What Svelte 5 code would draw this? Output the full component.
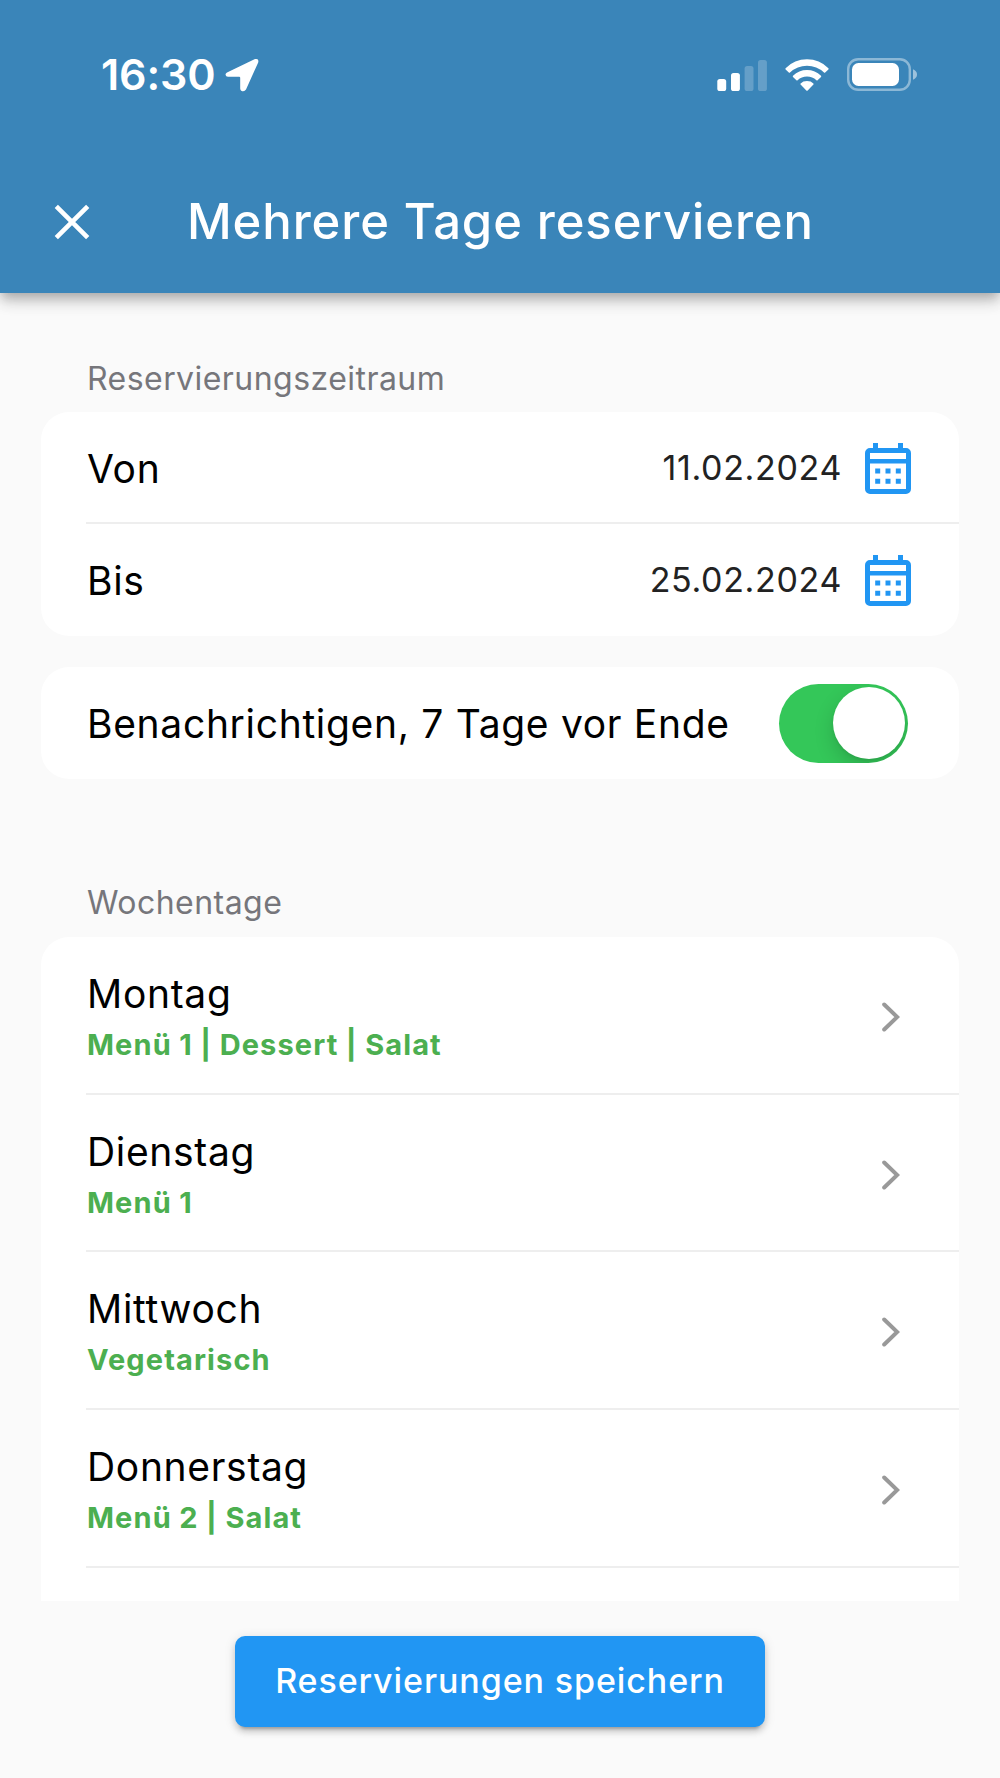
<script lang="ts">
  type Day = { name: string; menu: string };

  const range = [
    { label: 'Von', date: '11.02.2024' },
    { label: 'Bis', date: '25.02.2024' },
  ];

  const days: Day[] = [
    { name: 'Montag', menu: 'Menü 1 | Dessert | Salat' },
    { name: 'Dienstag', menu: 'Menü 1' },
    { name: 'Mittwoch', menu: 'Vegetarisch' },
    { name: 'Donnerstag', menu: 'Menü 2 | Salat' },
  ];

  let notify = $state(true);
</script>

<div class="screen">
  <header>
    <div class="status">
      <span class="time">16:30</span>
      <svg class="location" width="34" height="34" viewBox="0 0 34 34" aria-hidden="true">
        <path d="M2 14.6L30 1.1Q34.2 0 33.2 4.4L21 31.6Q19.4 34 16.6 33Q15.2 32.2 15.2 30.6V19.8Q15.2 18.8 14.2 18.8H3Q.8 18.6.5 16.8.5 15.3 2 14.6z" fill="#fff"/>
      </svg>
      <div class="status-icons">
        <svg width="50" height="32" viewBox="0 0 50 32" fill="#fff" aria-hidden="true">
          <rect x="0.3" y="20" width="8.9" height="12" rx="2.6"/>
          <rect x="14" y="14" width="8.9" height="18" rx="2.6"/>
          <rect x="27.6" y="7" width="8.9" height="25" rx="2.6" opacity="0.22"/>
          <rect x="41" y="1" width="8.9" height="31" rx="2.6" opacity="0.22"/>
        </svg>
        <svg class="wifi" width="44" height="32" viewBox="0 0 44 32" fill="#fff" aria-hidden="true">
          <path d="M.6 9.2Q9.5.3 22 .3T43.4 9.2Q43.9 9.8 43.4 10.4L40.2 13.6Q39.6 14.1 39 13.6 31.8 6.8 22 6.8T5 13.6Q4.4 14.1 3.8 13.6L.6 10.4Q.1 9.8.6 9.2z"/>
          <path d="M8 16.7Q13.8 11 22 11T36 16.7Q36.5 17.3 36 17.9L32.6 21.2Q32 21.7 31.4 21.2 27.5 17.5 22 17.5T12.6 21.2Q12 21.7 11.4 21.2L8 17.9Q7.5 17.3 8 16.7z"/>
          <path d="M15.6 24.4Q18 22 22 22T28.4 24.4Q28.9 25 28.4 25.6L22.7 31.4Q22 32 21.3 31.4L15.6 25.6Q15.1 25 15.6 24.4z"/>
        </svg>
        <svg class="battery" width="70" height="33" viewBox="0 0 70 33" aria-hidden="true">
          <rect x="1.2" y="1.2" width="61.6" height="30.6" rx="10" fill="none" stroke="#fff" stroke-width="2.4" opacity="0.42"/>
          <rect x="5" y="5" width="47" height="23" rx="6.5" fill="#fff"/>
          <path d="M66 11.3Q70 13 70 16.5T66 21.7z" fill="#fff" opacity="0.5"/>
        </svg>
      </div>
    </div>
    <div class="appbar">
      <svg class="close" width="36" height="36" viewBox="0 0 36 36" fill="none" aria-hidden="true">
        <path d="M2.3 2.3L33.7 33.7M33.7 2.3L2.3 33.7" stroke="#fff" stroke-width="4.6"/>
      </svg>
      <h1>Mehrere Tage reservieren</h1>
    </div>
  </header>

  <main>
    <h2>Reservierungszeitraum</h2>
    <section class="card">
      {#each range as { label, date }}
        <div class="row">
          <span class="label">{label}</span>
          <span class="date">{date}</span>
          <svg class="calendar" width="46" height="51" viewBox="0 0 46 51" aria-hidden="true">
            <g fill="#2196f3">
              <path fill-rule="evenodd" d="M8 0h5v5h20V0h5v5h3a5 5 0 015 5v36a5 5 0 01-5 5H5a5 5 0 01-5-5V10a5 5 0 015-5h3zM5 10v6h36v-6zM5 20.5v25.5h36V20.5z"/>
              <path d="M10.2 25.5h5v5h-5zM20.5 25.5h5v5h-5zM30.8 25.5h5v5h-5zM10.2 35.7h5v5h-5zM20.5 35.7h5v5h-5zM30.8 35.7h5v5h-5z"/>
            </g>
          </svg>
        </div>
      {/each}
    </section>

    <section class="card notify">
      <div class="row">
        <span class="label">Benachrichtigen, 7 Tage vor Ende</span>
        <button
          class="switch"
          class:on={notify}
          role="switch"
          aria-checked={notify}
          aria-label="Benachrichtigen"
          onclick={() => (notify = !notify)}
        >
          <span class="knob"></span>
        </button>
      </div>
    </section>

    <h2 class="days-title">Wochentage</h2>
    <section class="card">
      {#each days as day}
        <div class="row day">
          <div class="day-text">
            <span class="label">{day.name}</span>
            <span class="menu">{day.menu}</span>
          </div>
          <svg class="chevron" width="18" height="30" viewBox="0 0 18 30" fill="none" aria-hidden="true">
            <path d="M2.2 2.5L15.2 15L2.2 27.5" stroke="#999" stroke-width="4" stroke-linecap="round"/>
          </svg>
        </div>
      {/each}
      <div class="row day"></div>
    </section>
  </main>

  <footer>
    <button class="save">Reservierungen speichern</button>
  </footer>
</div>

<style>
  :global(body) {
    margin: 0;
    background: #fafafa;
  }
  .screen {
    display: flex;
    flex-direction: column;
    width: 1000px;
    height: 1778px;
    overflow: hidden;
    background: #fafafa;
    color: #000;
    font-family: Inter, "Liberation Sans", sans-serif;
  }
  header {
    box-sizing: border-box;
    flex: none;
    z-index: 1;
    height: 293px;
    background: #3a85b9;
    color: #fff;
    box-shadow:
      0 5px 10px -2px rgba(0, 0, 0, 0.2),
      0 10px 13px rgba(0, 0, 0, 0.14),
      0 2px 25px rgba(0, 0, 0, 0.06);
  }
  .status {
    display: flex;
    align-items: center;
    height: 149px;
    padding: 0 83px 0 101px;
  }
  .time {
    padding-bottom: 2px;
    font-size: 43px;
    font-weight: 600;
    letter-spacing: -0.1px;
  }
  .location {
    margin-left: 9px;
  }
  .status-icons {
    display: flex;
    align-items: center;
    margin-left: auto;
  }
  .wifi,
  .battery {
    margin-left: 18px;
  }
  .appbar {
    display: flex;
    align-items: center;
    height: 145px;
    padding-left: 54px;
  }
  h1 {
    margin: 0 0 0 97px;
    font-size: 49px;
    font-weight: 500;
    letter-spacing: 0.9px;
    white-space: nowrap;
  }
  main {
    flex: none;
    box-sizing: border-box;
    height: 1308px;
    padding: 66px 41px 0;
    overflow: hidden;
  }
  h2 {
    margin: 0 0 13px 46px;
    font-size: 32px;
    font-weight: 400;
    line-height: 40px;
    letter-spacing: 0.45px;
    color: #76767b;
  }
  .card {
    border-radius: 28px;
    background: #fff;
  }
  .row {
    display: flex;
    align-items: center;
    box-sizing: border-box;
    height: 112px;
    margin-left: 45px;
    padding-right: 48px;
  }
  .row:not(:last-child) {
    padding-top: 2px;
    border-bottom: 2px solid #eee;
  }
  .label {
    margin-left: 1px;
    padding-top: 1px;
    font-size: 39px;
    line-height: 48px;
    letter-spacing: 0.68px;
    white-space: nowrap;
  }
  .date {
    margin-left: auto;
    padding-bottom: 2px;
    font-size: 34px;
    letter-spacing: 0.65px;
    color: #222;
  }
  .calendar {
    margin-left: 23px;
  }
  .notify {
    margin-top: 31px;
  }
  .notify .row {
    padding-right: 51px;
  }
  .switch {
    display: flex;
    align-items: center;
    box-sizing: border-box;
    width: 129px;
    height: 79px;
    margin-left: auto;
    padding: 0 3px;
    border: 0;
    border-radius: 40px;
    background: #e5e5ea;
    overflow: hidden;
  }
  .switch.on {
    justify-content: flex-end;
    background: #34c759;
  }
  .knob {
    width: 72px;
    height: 72px;
    border-radius: 50%;
    background: #fff;
    box-shadow: 0 8px 20px rgba(0, 0, 0, 0.16), 0 2px 3px rgba(0, 0, 0, 0.06);
  }
  .days-title {
    margin-top: 104px;
    margin-bottom: 14px;
  }
  .row.day {
    height: 157.7px;
    padding-top: 4px;
    padding-right: 59px;
  }
  .day-text {
    display: flex;
    flex-direction: column;
    gap: 7px;
  }
  .menu {
    margin-left: 1px;
    font-size: 29px;
    font-weight: 700;
    line-height: 40px;
    letter-spacing: 1.1px;
    word-spacing: -0.5px;
    color: #4caf50;
  }
  .chevron {
    margin-left: auto;
  }
  footer {
    display: flex;
    justify-content: center;
    padding-top: 35px;
  }
  .save {
    width: 530px;
    height: 91px;
    padding: 0 0 2px;
    border: 0;
    border-radius: 10px;
    background: #2196f3;
    color: #fff;
    font: 500 34px Inter, "Liberation Sans", sans-serif;
    letter-spacing: 0.9px;
    box-shadow:
      0 7px 3px -5px rgba(0, 0, 0, 0.2),
      0 5px 6px rgba(0, 0, 0, 0.14),
      0 2px 12px rgba(0, 0, 0, 0.12);
  }
</style>
